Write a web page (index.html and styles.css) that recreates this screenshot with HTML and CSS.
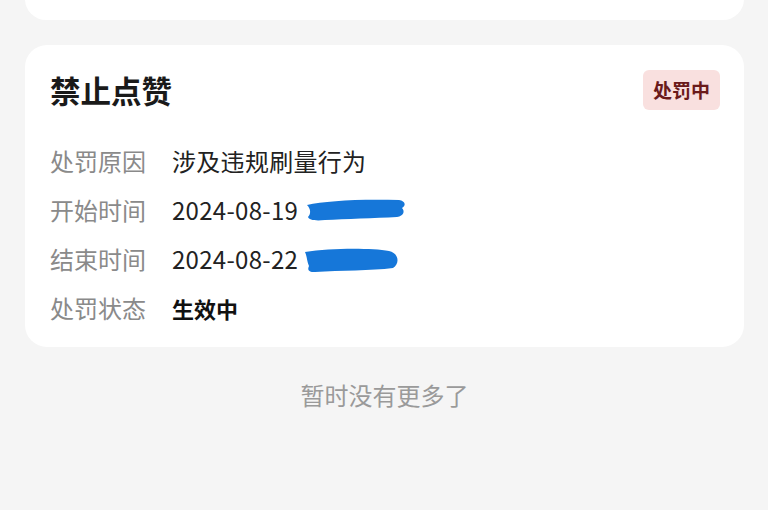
FILE: index.html
```html
<!DOCTYPE html>
<html lang="zh">
<head>
<meta charset="utf-8">
<link rel="stylesheet" href="styles.css">
</head>
<body>
<div class="page">
  <div class="card card-top"></div>
  <div class="card card-main">
    <div class="head">
      <div class="title">禁止点赞</div>
      <div class="badge">处罚中</div>
    </div>
    <div class="rows">
      <div class="row"><span class="label">处罚原因</span><span class="value">涉及违规刷量行为</span></div>
      <div class="row"><span class="label">开始时间</span><span class="value">2024-08-19</span>
        <svg class="scribble" width="102" height="26" viewBox="0 0 102 26"><path d="M2 8 C20 4 50 2 94 3 C101 4 101 9 97 11 C100 14 99 19 92 20 C70 21 40 22 20 23 C10 24 4 23 3 20 C6 17 6 12 2 8 Z" fill="#1677d9"/></svg>
      </div>
      <div class="row"><span class="label">结束时间</span><span class="value">2024-08-22</span>
        <svg class="scribble s2" width="100" height="28" viewBox="0 0 100 28"><path d="M4 6 C30 2 70 2 88 5 C98 7 99 18 92 22 C70 25 40 24 14 26 C8 26 6 24 8 20 C6 16 6 10 4 6 Z" fill="#1677d9"/></svg>
      </div>
      <div class="row"><span class="label">处罚状态</span><span class="value strong">生效中</span></div>
    </div>
  </div>
  <div class="footer">暂时没有更多了</div>
</div>
</body>
</html>
```
FILE: styles.css
```css
* { box-sizing: border-box; }
html, body { margin: 0; padding: 0; }
body {
  background: #f5f5f5;
  font-family: "Noto Sans CJK SC", "Noto Sans", sans-serif;
  width: 768px;
  height: 510px;
  overflow: hidden;
}
.page {
  padding: 0 24px 0 25px;
  display: flex;
  flex-direction: column;
}
.card {
  background: #fff;
  border-radius: 22px;
}
.card-top {
  height: 42px;
  margin-top: -22px;
}
.card-main {
  margin-top: 25px;
  height: 302px;
  padding: 25px 24px 0 25px;
}
.head {
  display: flex;
  justify-content: space-between;
  align-items: center;
  height: 40px;
}
.title {
  font-size: 30.5px;
  font-weight: 700;
  color: #1a1a1a;
  line-height: 40px;
}
.badge {
  background: #f9e0df;
  color: #6b1a1a;
  font-size: 19px;
  font-weight: 700;
  border-radius: 6px;
  height: 40px;
  line-height: 40px;
  padding: 0 10px;
}
.rows {
  margin-top: 26px;
  display: flex;
  flex-direction: column;
}
.row {
  height: 49px;
  display: flex;
  align-items: center;
}
.label {
  width: 122px;
  font-size: 24px;
  color: #8a8a8a;
}
.value {
  font-size: 24px;
  color: #222;
  letter-spacing: 0.3px;
}
.value.strong {
  font-weight: 700;
  font-size: 22px;
  letter-spacing: 0;
  color: #111;
}
.scribble {
  margin-left: 7px;
}
.s2 { margin-left: 3px; margin-top: 2px; }
.footer {
  text-align: center;
  margin-top: 30px;
  font-size: 24px;
  color: #9a9a9a;
}
```
